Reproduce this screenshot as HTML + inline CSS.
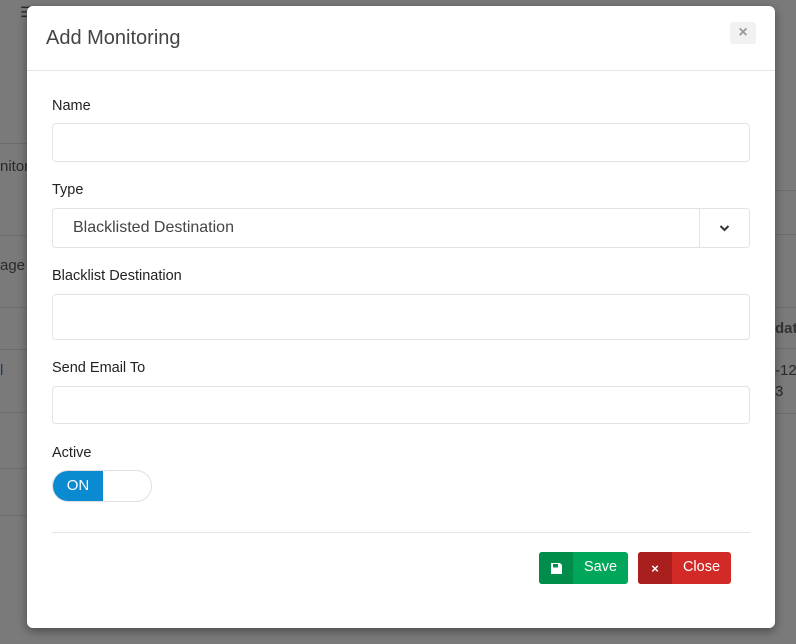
<!DOCTYPE html>
<html><head><style>
*{box-sizing:border-box;margin:0;padding:0}
body{width:796px;height:644px;background:#7a7a7a;font-family:"Liberation Sans",sans-serif;position:relative;overflow:hidden}
.ln{position:absolute;height:1px;background:#6c6c6c}
.bt{position:absolute;font-size:15px;color:#2a2a2a}
.modal{position:absolute;left:27px;top:6px;width:748px;height:622px;background:#fff;border-radius:6px;box-shadow:0 3px 10px rgba(0,0,0,.4)}
.hdr{height:65px;border-bottom:1px solid #e5e5e5;position:relative}
.hdr h4{position:absolute;left:19px;top:21px;font-size:20px;font-weight:normal;color:#444}
.x{position:absolute;left:703px;top:16px;width:26px;height:22px;background:#f1f1f1;border-radius:3px;color:#999;font-size:16px;text-align:center;line-height:21px;font-weight:bold}
.lbl{position:absolute;left:25px;font-size:14.5px;color:#222}
.inp{position:absolute;left:25px;width:698px;border:1px solid #e3e3e3;border-radius:4px}
.sel{font-size:16px;color:#444;padding-left:20px}
.sel .ar{position:absolute;right:0;top:0;bottom:0;width:50px;border-left:1px solid #e3e3e3}
.tog{position:absolute;left:25px;top:464px;width:100px;height:32px;border:1px solid #e0e0e0;border-radius:16px;overflow:hidden}
.tog .on{width:50px;height:100%;background:#0a8ad0;color:#fff;font-size:15px;text-align:center;line-height:30px}
.hr{position:absolute;left:25px;top:526px;width:698px;height:1px;background:#e5e5e5}
.btn{position:absolute;top:546px;height:32px;border-radius:3px;overflow:hidden;color:#fff;font-size:14.5px;display:flex}
.btn .ic{width:34px;display:flex;align-items:center;justify-content:center}
.btn .t{flex:1;text-align:center;line-height:31px}
</style></head><body>
<div class="ln" style="left:0;width:30px;top:143px"></div>
<div class="ln" style="left:0;width:30px;top:235px"></div>
<div class="ln" style="left:0;width:30px;top:307px"></div>
<div class="ln" style="left:0;width:30px;top:349px"></div>
<div class="ln" style="left:0;width:30px;top:412px"></div>
<div class="ln" style="left:0;width:30px;top:468px"></div>
<div class="ln" style="left:0;width:30px;top:515px"></div>
<div class="ln" style="left:770px;width:26px;top:190px"></div>
<div class="ln" style="left:770px;width:26px;top:234px"></div>
<div class="ln" style="left:770px;width:26px;top:307px"></div>
<div class="ln" style="left:770px;width:26px;top:348px"></div>
<div class="ln" style="left:770px;width:26px;top:413px"></div>
<div class="bt" style="left:0;top:158px">nitor</div>
<div class="bt" style="left:0;top:257px">age</div>
<div class="bt" style="left:0;top:362px;color:#1a3a6a">l</div>
<div class="bt" style="left:775px;top:320px;font-weight:bold;color:#333">dat</div>
<div class="bt" style="left:775px;top:362px">-12</div>
<div class="bt" style="left:775px;top:383px">3</div>
<div class="bt" style="left:20px;top:4px;font-size:14px">☰</div>
<div class="modal">
<div class="hdr"><h4>Add Monitoring</h4><div class="x">×</div></div>
<div class="lbl" style="top:92px">Name</div>
<div class="inp" style="top:117px;height:39px"></div>
<div class="lbl" style="top:176px">Type</div>
<div class="inp sel" style="top:202px;height:40px;line-height:38px">Blacklisted Destination<div class="ar"><svg width="50" height="38" viewBox="0 0 50 38"><path d="M20.5 17l4 4 4-4" stroke="#333" stroke-width="2" fill="none"/></svg></div></div>
<div class="lbl" style="top:262px">Blacklist Destination</div>
<div class="inp" style="top:288px;height:46px"></div>
<div class="lbl" style="top:354px">Send Email To</div>
<div class="inp" style="top:380px;height:38px"></div>
<div class="lbl" style="top:439px">Active</div>
<div class="tog"><div class="on">ON</div></div>
<div class="hr"></div>
<div class="btn" style="left:512px;width:89px;background:#00a65a"><div class="ic" style="background:#008d4c"><svg width="11" height="11" viewBox="0 0 11 11"><path d="M0 0h9l2 2v9H0z" fill="#fff"/><rect x="2" y="1" width="5" height="3.5" fill="#008d4c"/></svg></div><div class="t">Save</div></div>
<div class="btn" style="left:611px;width:93px;background:#d12a27"><div class="ic" style="background:#a91f1e;font-weight:bold;font-size:13px">×</div><div class="t">Close</div></div>
</div>
</body></html>
